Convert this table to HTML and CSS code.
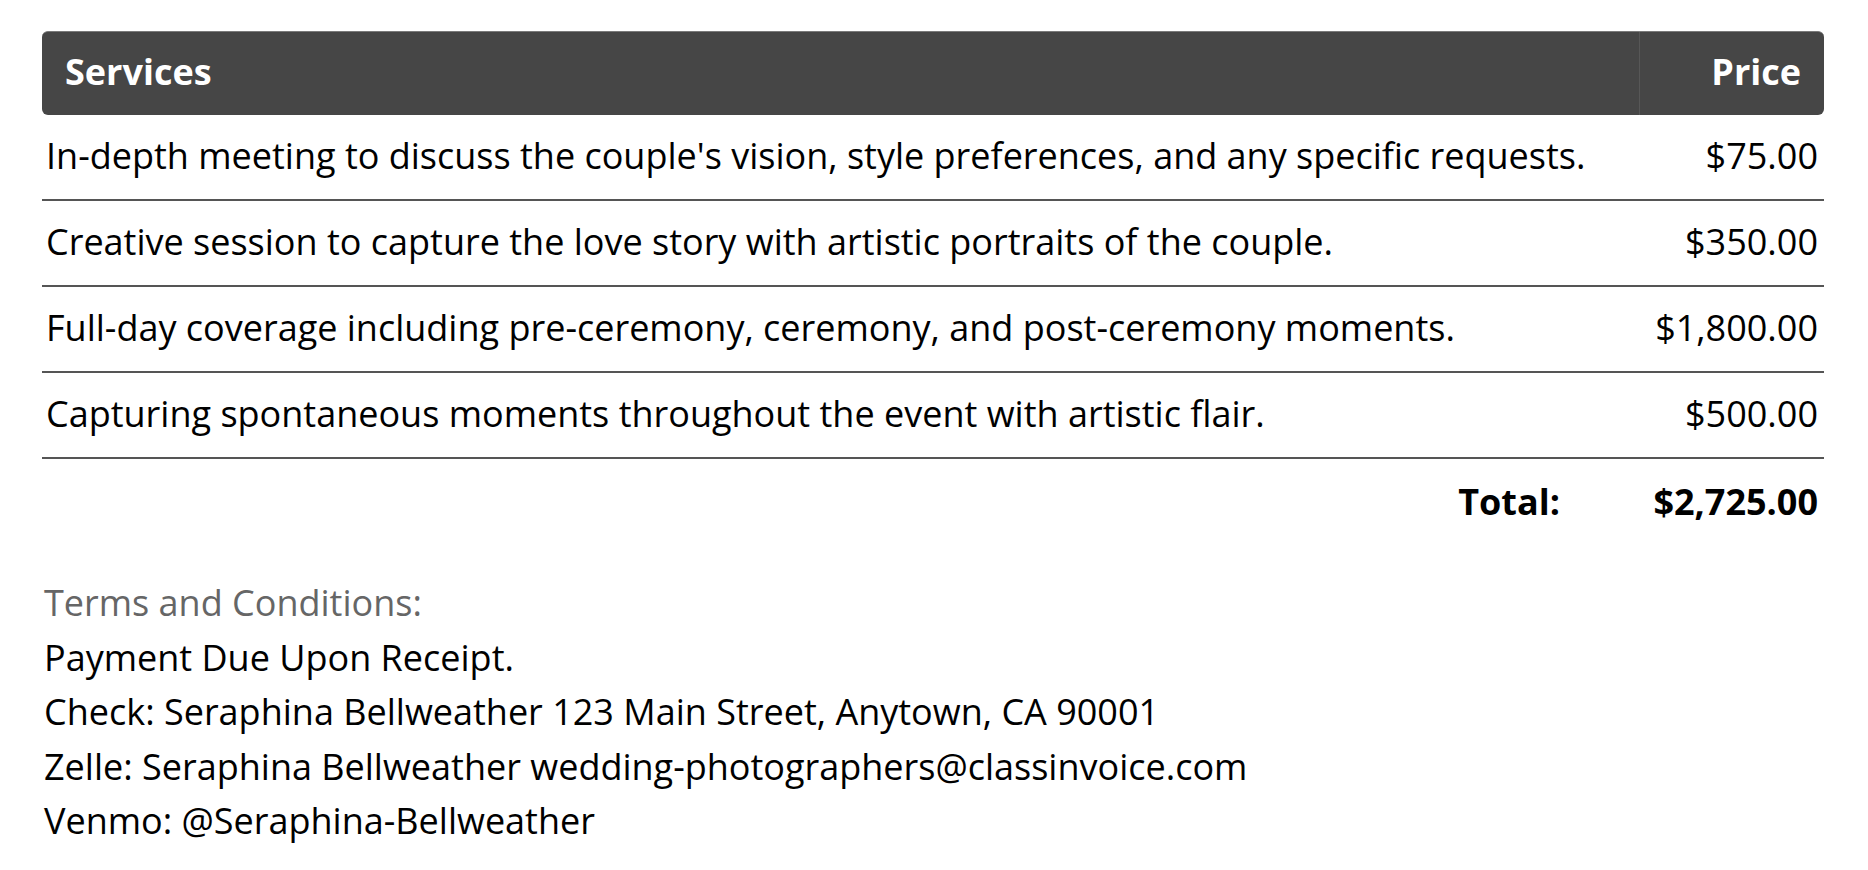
FILE: index.html
```html
<!DOCTYPE html>
<html lang="en">
<head>
  <meta charset="UTF-8">
  <meta name="viewport" content="width=device-width, initial-scale=1.0">
  <title>Invoice Services</title>
  <link rel="stylesheet" href="styles.css">
</head>
<body>

  <div class="invoice">
    <table class="services">
      <thead>
        <tr>
          <th class="service-col">Services</th>
          <th class="price-col">Price</th>
        </tr>
      </thead>
      <tbody>
        <tr>
          <td>In-depth meeting to discuss the couple's vision, style preferences, and any specific requests.</td>
          <td class="price">$75.00</td>
        </tr>
        <tr>
          <td>Creative session to capture the love story with artistic portraits of the couple.</td>
          <td class="price">$350.00</td>
        </tr>
        <tr>
          <td>Full-day coverage including pre-ceremony, ceremony, and post-ceremony moments.</td>
          <td class="price">$1,800.00</td>
        </tr>
        <tr>
          <td>Capturing spontaneous moments throughout the event with artistic flair.</td>
          <td class="price">$500.00</td>
        </tr>
      </tbody>
      <tfoot>
        <tr>
          <td class="total-label">Total:</td>
          <td class="price total-value">$2,725.00</td>
        </tr>
      </tfoot>
    </table>

    <div class="terms">
      <p class="terms-title">Terms and Conditions:</p>
      <p>Payment Due Upon Receipt.</p>
      <p>Check: Seraphina Bellweather 123 Main Street, Anytown, CA 90001</p>
      <p>Zelle: Seraphina Bellweather wedding-photographers@classinvoice.com</p>
      <p>Venmo: @Seraphina-Bellweather</p>
    </div>
  </div>

</body>
</html>
```
FILE: styles.css
```css
body {
  margin: 0;
  font-family: "Open Sans", Arial, sans-serif;
  font-size: 36px;
  font-weight: 500;
  color: #000;
  background: #fff;
}

.invoice {
  padding: 31px 44px 0 42px;
}

.services {
  width: 100%;
  border-collapse: separate;
  border-spacing: 0;
}

.services th {
  background-color: #464646;
  color: white;
  font-weight: bold;
  line-height: 48px;
  padding: 16px 23px 19px;
  border-top: 1px solid #7a7a7a;
}

.service-col {
  text-align: left;
  border-top-left-radius: 6px;
  border-bottom-left-radius: 6px;
  border-right: 1px solid #575757;
}

.price-col {
  width: 138px;
  text-align: right;
  border-top-right-radius: 6px;
  border-bottom-right-radius: 6px;
}

.services td {
  line-height: 48px;
  padding: 17px 6px 19px 4px;
  text-align: left;
}

.services tbody td {
  border-bottom: 2px solid #555;
}

.services td.price {
  text-align: right;
  white-space: nowrap;
}

.total-label {
  font-weight: bold;
}

.services td.total-label {
  text-align: right;
  padding-top: 19px;
  padding-bottom: 17px;
  padding-right: 80px;
}

.total-value {
  font-weight: bold;
}

.services td.total-value {
  padding-top: 19px;
  padding-bottom: 17px;
}

.terms {
  margin-top: 33px;
  padding-left: 2px;
}

.terms p {
  margin: 0;
  line-height: 54.5px;
}

.terms-title {
  color: #666;
}
```
